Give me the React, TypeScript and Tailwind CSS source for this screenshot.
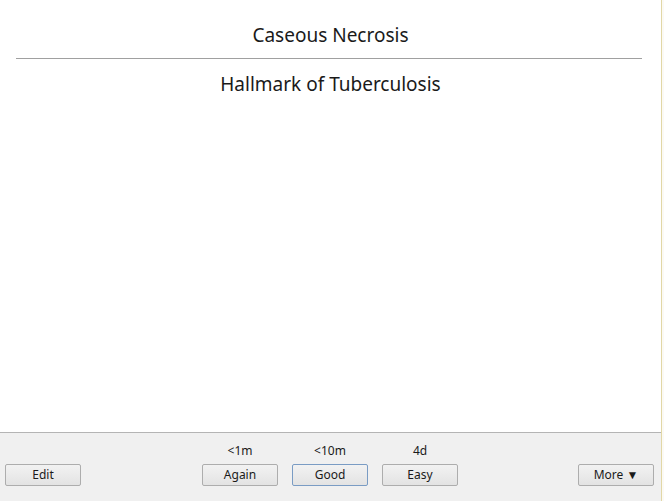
const font = { fontFamily: '"Segoe UI", "Noto Sans", "Open Sans", sans-serif' };

const answers = [
  { label: "<1m", text: "Again", focus: false },
  { label: "<10m", text: "Good", focus: true },
  { label: "4d", text: "Easy", focus: false },
];

function Btn({ text, focus }: { text: string; focus?: boolean }) {
  return (
    <button
      className={
        "h-[22px] w-[76px] rounded-[2px] border bg-gradient-to-b from-[#f2f2f2] to-[#e3e3e3] text-[12px] leading-none text-[#1a1a1a] " +
        (focus ? "border-[#7a9cc4]" : "border-[#adadad]")
      }
    >
      {text}
    </button>
  );
}

export default function App() {
  return (
    <div className="flex h-[501px] w-[664px] overflow-hidden bg-white" style={font}>
      <div className="flex w-[661px] flex-col">
        <div className="flex flex-1 flex-col items-center bg-white">
          <div className="pt-[22px] text-[19px] leading-[26px] text-[#1a1a1a]">Caseous Necrosis</div>
          <div className="mt-[10px] h-px w-[626px] self-start ml-[16px] bg-[#a0a0a0]" />
          <div className="mt-[12px] text-[19px] leading-[26px] text-[#1a1a1a]">Hallmark of Tuberculosis</div>
        </div>
        <div className="h-[69px] border-t border-[#b4b4b4] bg-[#f0f0f0] text-[#1a1a1a]">
          <div className="flex h-full items-end pb-[15px] pl-[5px] pr-[7px]">
            <Btn text="Edit" />
            <div className="ml-[121px] flex gap-[14px]">
              {answers.map((a) => (
                <div key={a.text} className="flex flex-col items-center">
                  <div className="mb-[6px] text-[12px] leading-[14px]">{a.label}</div>
                  <Btn text={a.text} focus={a.focus} />
                </div>
              ))}
            </div>
            <div className="ml-auto">
              <Btn text="More ▼" />
            </div>
          </div>
        </div>
      </div>
      <div className="w-px bg-[#e2d7a6]" />
      <div className="w-[2px] bg-[#fbfaf5]" />
    </div>
  );
}
